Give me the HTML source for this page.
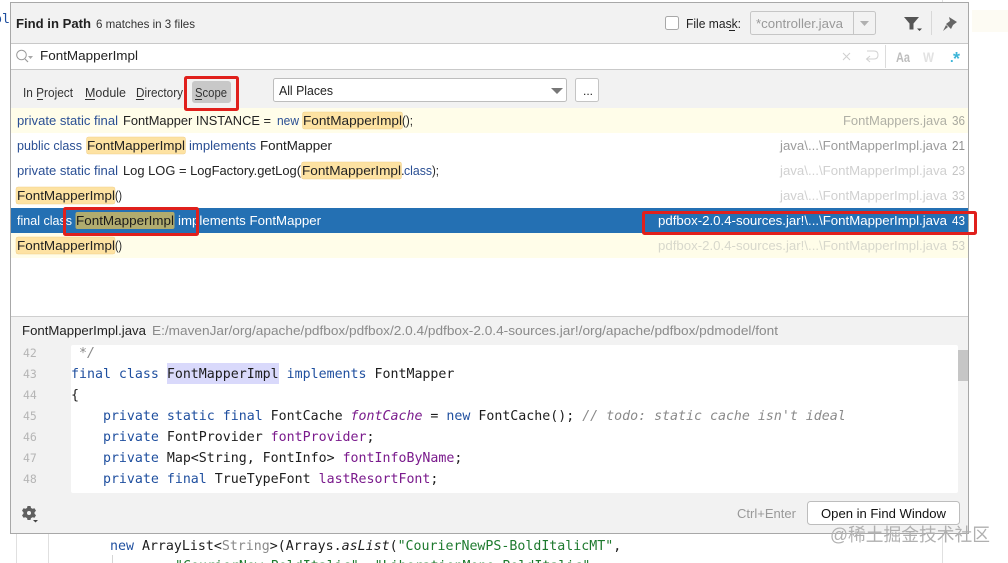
<!DOCTYPE html>
<html><head><meta charset="utf-8"><title>Find in Path</title>
<style>
html,body{margin:0;padding:0;background:#fff;width:1008px;height:563px;overflow:hidden}
svg{display:block}
text{font-family:"Liberation Sans","Noto Sans CJK SC",sans-serif;font-size:13px;fill:#222;white-space:pre}
.m{font-family:"DejaVu Sans Mono","Liberation Mono",monospace;font-size:13.28px;fill:#1c1c1c}
.k{fill:#1f4f9f}
.b{fill:#2a4f94}
.g{font-family:"DejaVu Sans Mono","Liberation Mono",monospace;font-size:11.5px;fill:#b5b5b5}
.i{font-style:italic}
.p{fill:#7a1a8c}
.c{fill:#8a8a8a;font-style:italic}
</style></head><body>
<svg width="1008" height="563" viewBox="0 0 1008 563" xmlns="http://www.w3.org/2000/svg">
<rect width="1008" height="563" fill="#fff"/>
<!-- background editor -->
<rect x="972" y="10" width="36" height="22" fill="#fdfbf3"/>
<path d="M942.5 0V2M942.5 533V563M16.5 533V563M48.5 533V563" stroke="#e0e0e0"/>
<path d="M112.5 555V563" stroke="#d5d5d5"/>
<text class="m k" x="-6" y="23">ol</text>
<text class="m" x="110" y="550"><tspan class="k">new</tspan> ArrayList&lt;<tspan fill="#8a8a8a">String</tspan>&gt;(Arrays.<tspan font-style="italic">asList</tspan>(<tspan fill="#1e7a2e">"CourierNewPS-BoldItalicMT"</tspan>,</text>
<text class="m" x="175" y="570" fill="#1e7a2e" style="fill:#1e7a2e">"CourierNew-BoldItalic", "LiberationMono-BoldItalic",</text>
<!-- dialog -->
<rect x="10.5" y="2.5" width="958" height="531" fill="#f2f2f2" stroke="#a8a8a8"/>
<!-- header -->
<text x="16" y="28" font-weight="bold" style="font-weight:bold" textLength="75" lengthAdjust="spacingAndGlyphs">Find in Path</text>
<text x="96" y="28" font-size="12" style="font-size:12px;fill:#333" textLength="99" lengthAdjust="spacingAndGlyphs">6 matches in 3 files</text>
<rect x="665.5" y="16.5" width="13" height="13" rx="2" fill="#fff" stroke="#a8a8a8"/>
<text x="686" y="28" textLength="55" lengthAdjust="spacingAndGlyphs">File mask:</text>
<path d="M729 30.5H735" stroke="#222"/>
<rect x="750.5" y="11.5" width="125" height="23" rx="2" fill="#f2f2f2" stroke="#c6c6c6"/>
<path d="M853.5 12V34" stroke="#c6c6c6"/>
<text x="756" y="28" style="fill:#999" textLength="87" lengthAdjust="spacingAndGlyphs">*controller.java</text>
<path d="M860 21H869L864.5 26Z" fill="#b0b0b0"/>
<path d="M904 17H919L913.5 23.5V29.5H909.500V23.5Z" fill="#555"/>
<path d="M917 28.5H922L919.5 31Z" fill="#444"/>
<path d="M931.5 11V35" stroke="#d8d8d8"/>
<path d="M949 17L957 22L953 25L951 29L946 24L950 21ZM946 25L943 31L948 27Z" fill="#666"/>
<!-- search field -->
<rect x="11" y="44" width="957" height="25" fill="#fff"/>
<path d="M11 43.5H968M11 69.5H968" stroke="#c9c9c9"/>
<circle cx="21.5" cy="55" r="4.8" fill="none" stroke="#9a9a9a" stroke-width="1"/>
<path d="M25 59L28 62" stroke="#9a9a9a" stroke-width="1.2"/>
<path d="M28 56H33L30.5 59Z" fill="#a8a8a8"/>
<text x="40" y="60" textLength="98" lengthAdjust="spacingAndGlyphs">FontMapperImpl</text>
<path d="M843 53L850 60M850 53L843 60" stroke="#cfcfcf"/>
<path d="M867 51H874Q878 51 878 55Q878 59 874 59H867M870 56L866.5 59L870 62" fill="none" stroke="#d2d2d2"/>
<path d="M885.5 45V68" stroke="#dcdcdc"/>
<text x="896" y="62" style="font-weight:bold;fill:#bdbdbd;font-size:14px" textLength="14" lengthAdjust="spacingAndGlyphs">Aa</text>
<text x="923" y="62" style="font-weight:bold;fill:#e2e2e2;font-size:14px" textLength="11" lengthAdjust="spacingAndGlyphs">W</text>
<text x="950" y="62" style="font-weight:bold;fill:#3cb5d8;font-size:13px">.</text>
<text x="953" y="65" style="font-weight:bold;fill:#3cb5d8;font-size:18px">*</text>
<!-- tabs -->
<text x="23" y="97" style="fill:#333;font-size:12.5px" textLength="50" lengthAdjust="spacingAndGlyphs">In Project</text>
<path d="M37 99.5H43" stroke="#333"/>
<text x="85" y="97" style="fill:#333;font-size:12.5px" textLength="41" lengthAdjust="spacingAndGlyphs">Module</text>
<path d="M85 99.5H95" stroke="#333"/>
<text x="136" y="97" style="fill:#333;font-size:12.5px" textLength="47" lengthAdjust="spacingAndGlyphs">Directory</text>
<path d="M136 99.5H144" stroke="#333"/>
<rect x="192" y="81" width="39" height="22" rx="3" fill="#c8c8c8"/>
<text x="195" y="97" style="fill:#333;font-size:12.5px" textLength="32" lengthAdjust="spacingAndGlyphs">Scope</text>
<path d="M195 99.5H202" stroke="#333"/>
<rect x="273.5" y="78.5" width="293" height="23" rx="2" fill="#fff" stroke="#bdbdbd"/>
<text x="279" y="95" textLength="54" lengthAdjust="spacingAndGlyphs">All Places</text>
<path d="M551 88H563L557 94Z" fill="#777"/>
<rect x="575.5" y="78.5" width="23" height="23" rx="2" fill="#fff" stroke="#c4c4c4"/>
<text x="583" y="95" style="font-size:12px">...</text>
<!-- results -->
<rect x="11" y="108" width="957" height="208" fill="#fff"/>
<rect x="11" y="108" width="957" height="25" fill="#fffde9"/>
<rect x="11" y="233" width="957" height="25" fill="#fffde9"/>
<rect x="11" y="208" width="957" height="25" fill="#2470b3"/>
<g fill="#fde2a2" stroke="#f0cf8a" stroke-width=".5">
<rect x="302.5" y="112" width="100" height="17" rx="2"/>
<rect x="86.5" y="137" width="99" height="17" rx="2"/>
<rect x="301.5" y="162" width="100" height="17" rx="2"/>
<rect x="16" y="187" width="99" height="17" rx="2"/>
<rect x="16" y="237" width="99" height="17" rx="2"/>
</g>
<rect x="75.5" y="212" width="99" height="17" rx="2" fill="#b1ac6e"/>
<!-- row 1 -->
<text class="b" x="17" y="125" textLength="101" lengthAdjust="spacingAndGlyphs">private static final</text>
<text x="123" y="125" textLength="148" lengthAdjust="spacingAndGlyphs">FontMapper INSTANCE =</text>
<text class="b" x="277" y="125" textLength="22" lengthAdjust="spacingAndGlyphs">new</text>
<text x="303" y="125" textLength="99" lengthAdjust="spacingAndGlyphs">FontMapperImpl</text>
<text x="402" y="125" textLength="11" lengthAdjust="spacingAndGlyphs">();</text>
<text x="843" y="125" style="fill:#b0b0a6" textLength="104" lengthAdjust="spacingAndGlyphs">FontMappers.java</text>
<text x="952" y="125" style="fill:#a8a89e" textLength="13" lengthAdjust="spacingAndGlyphs">36</text>
<!-- row 2 -->
<text class="b" x="17" y="150" textLength="65" lengthAdjust="spacingAndGlyphs">public class</text>
<text x="87" y="150" textLength="98" lengthAdjust="spacingAndGlyphs">FontMapperImpl</text>
<text class="b" x="189" y="150" textLength="67" lengthAdjust="spacingAndGlyphs">implements</text>
<text x="260" y="150" textLength="72" lengthAdjust="spacingAndGlyphs">FontMapper</text>
<text x="780" y="150" style="fill:#9c9c9c" textLength="167" lengthAdjust="spacingAndGlyphs">java\...\FontMapperImpl.java</text>
<text x="952" y="150" style="fill:#8f8f8f" textLength="13" lengthAdjust="spacingAndGlyphs">21</text>
<!-- row 3 -->
<text class="b" x="17" y="175" textLength="101" lengthAdjust="spacingAndGlyphs">private static final</text>
<text x="123" y="175" textLength="178" lengthAdjust="spacingAndGlyphs">Log LOG = LogFactory.getLog(</text>
<text x="302" y="175" textLength="99" lengthAdjust="spacingAndGlyphs">FontMapperImpl</text>
<text x="401" y="175">.</text>
<text class="b" x="404" y="175" textLength="28" lengthAdjust="spacingAndGlyphs">class</text>
<text x="432" y="175" textLength="7" lengthAdjust="spacingAndGlyphs">);</text>
<text x="780" y="175" style="fill:#d0d0d0" textLength="167" lengthAdjust="spacingAndGlyphs">java\...\FontMapperImpl.java</text>
<text x="952" y="175" style="fill:#c4c4c4" textLength="13" lengthAdjust="spacingAndGlyphs">23</text>
<!-- row 4 -->
<text x="17" y="200" textLength="98" lengthAdjust="spacingAndGlyphs">FontMapperImpl</text>
<text x="115" y="200" textLength="7" lengthAdjust="spacingAndGlyphs">()</text>
<text x="780" y="200" style="fill:#d0d0d0" textLength="167" lengthAdjust="spacingAndGlyphs">java\...\FontMapperImpl.java</text>
<text x="952" y="200" style="fill:#c4c4c4" textLength="13" lengthAdjust="spacingAndGlyphs">33</text>
<!-- row 5 -->
<text x="17" y="225" style="fill:#fff" textLength="55" lengthAdjust="spacingAndGlyphs">final class</text>
<text x="76" y="225" style="fill:#1a1a1a" textLength="98" lengthAdjust="spacingAndGlyphs">FontMapperImpl</text>
<text x="178" y="225" style="fill:#fff" textLength="143" lengthAdjust="spacingAndGlyphs">implements FontMapper</text>
<text x="658" y="225" style="fill:#fff" textLength="289" lengthAdjust="spacingAndGlyphs">pdfbox-2.0.4-sources.jar!\...\FontMapperImpl.java</text>
<text x="952" y="225" style="fill:#fff" textLength="13" lengthAdjust="spacingAndGlyphs">43</text>
<!-- row 6 -->
<text x="17" y="250" textLength="98" lengthAdjust="spacingAndGlyphs">FontMapperImpl</text>
<text x="115" y="250" textLength="7" lengthAdjust="spacingAndGlyphs">()</text>
<text x="658" y="250" style="fill:#d8d8cc" textLength="289" lengthAdjust="spacingAndGlyphs">pdfbox-2.0.4-sources.jar!\...\FontMapperImpl.java</text>
<text x="952" y="250" style="fill:#cfcfc4" textLength="13" lengthAdjust="spacingAndGlyphs">53</text>
<!-- preview -->
<rect x="11" y="316" width="957" height="217" fill="#f2f2f2"/>
<path d="M11 316.5H968" stroke="#cfcfcf"/>
<text x="22" y="335" style="fill:#222;font-size:12.5px" textLength="124" lengthAdjust="spacingAndGlyphs">FontMapperImpl.java</text>
<text x="152" y="335" style="fill:#8a8a8a;font-size:12.5px" textLength="626" lengthAdjust="spacingAndGlyphs">E:/mavenJar/org/apache/pdfbox/pdfbox/2.0.4/pdfbox-2.0.4-sources.jar!/org/apache/pdfbox/pdmodel/font</text>
<rect x="71" y="345" width="887" height="148" rx="2" fill="#fff"/>
<rect x="958" y="350" width="10" height="31" fill="#c6c6c6"/>
<rect x="167" y="363" width="112" height="21" fill="#d9d9fb"/>
<text class="g" x="23" y="357">42</text>
<text class="g" x="23" y="378">43</text>
<text class="g" x="23" y="399">44</text>
<text class="g" x="23" y="420">45</text>
<text class="g" x="23" y="441">46</text>
<text class="g" x="23" y="462">47</text>
<text class="g" x="23" y="483">48</text>
<text class="m c" x="71" y="357"> */</text>
<text class="m" x="71" y="378"><tspan class="k">final class</tspan> FontMapperImpl <tspan class="k">implements</tspan> FontMapper</text>
<text class="m" x="71" y="399">{</text>
<text class="m" x="71" y="420">    <tspan class="k">private static final</tspan> FontCache <tspan class="p i">fontCache</tspan> = <tspan class="k">new</tspan> FontCache(); <tspan class="c">// todo: static cache isn't ideal</tspan></text>
<text class="m" x="71" y="441">    <tspan class="k">private</tspan> FontProvider <tspan class="p">fontProvider</tspan>;</text>
<text class="m" x="71" y="462">    <tspan class="k">private</tspan> Map&lt;String, FontInfo&gt; <tspan class="p">fontInfoByName</tspan>;</text>
<text class="m" x="71" y="483">    <tspan class="k">private final</tspan> TrueTypeFont <tspan class="p">lastResortFont</tspan>;</text>
<!-- footer -->
<g transform="translate(29 513)">
<path d="M-1.5 -7H1.5L2 -5A5 5 0 0 1 3.5 -4.2L5.5 -4.8L7 -2.2L5.5 -.8A5 5 0 0 1 5.5 .8L7 2.2L5.5 4.8L3.5 4.2A5 5 0 0 1 2 5L1.5 7H-1.5L-2 5A5 5 0 0 1 -3.5 4.2L-5.5 4.8L-7 2.2L-5.5 .8A5 5 0 0 1 -5.5 -.8L-7 -2.2L-5.5 -4.8L-3.5 -4.2A5 5 0 0 1 -2 -5Z" fill="#5f5f5f"/>
<circle r="2" fill="#f2f2f2"/>
</g>
<path d="M33 520H38L35.5 522.5Z" fill="#444"/>
<text x="737" y="518" style="fill:#999;font-size:12.5px" textLength="59" lengthAdjust="spacingAndGlyphs">Ctrl+Enter</text>
<rect x="807.5" y="501.5" width="152" height="23" rx="3" fill="#fff" stroke="#bdbdbd"/>
<text x="821" y="518" style="fill:#111" textLength="125" lengthAdjust="spacingAndGlyphs">Open in Find Window</text>
<!-- watermark -->
<text x="830" y="541" style="font-size:18px;fill:#b0b0b0" textLength="160" lengthAdjust="spacingAndGlyphs">@稀土掘金技术社区</text>
<!-- red annotation boxes -->
<g fill="none" stroke="#e0201c" stroke-width="3">
<rect x="185.5" y="77.5" width="52" height="32" rx="1"/>
<rect x="64.5" y="208.5" width="133" height="26" rx="1"/>
<rect x="643.5" y="212.5" width="332" height="21" rx="1"/>
</g>
</svg>
</body></html>
